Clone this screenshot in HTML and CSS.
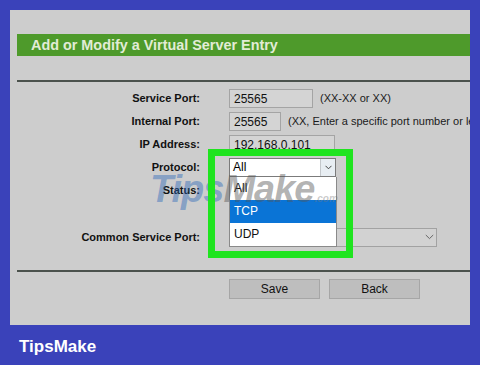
FILE: index.html
```html
<!DOCTYPE html>
<html lang="en">
<head>
    <meta charset="UTF-8">
    <meta name="viewport" content="width=device-width, initial-scale=1.0">
    <title>Add or Modify a Virtual Server Entry</title>
    <link rel="stylesheet" href="styles.css">
</head>
<body>
    <div class="panel">
        <h1 class="title-bar">Add or Modify a Virtual Server Entry</h1>
        <div class="rule"></div>

        <!-- Virtual server form -->
        <div class="form">
            <div class="row">
                <label>Service Port:</label>
                <div class="control">
                    <div class="text-box service">25565</div>
                    <span class="hint">(XX-XX or XX)</span>
                </div>
            </div>
            <div class="row">
                <label>Internal Port:</label>
                <div class="control">
                    <div class="text-box internal">25565</div>
                    <span class="hint">(XX, Enter a specific port number or leave it blank)</span>
                </div>
            </div>
            <div class="row">
                <label>IP Address:</label>
                <div class="control">
                    <div class="text-box address">192.168.0.101</div>
                </div>
            </div>
            <div class="row">
                <label>Protocol:</label>
                <div class="control">
                    <div class="select open">
                        <span class="value">All</span>
                        <span class="arrow">
                            <svg width="7" height="5" viewBox="0 0 7 5"><path d="M0.5 0.8 L3.5 3.8 L6.5 0.8" fill="none" stroke="#444" stroke-width="1"/></svg>
                        </span>
                    </div>
                </div>
            </div>
            <div class="row">
                <label>Status:</label>
                <div class="control">
                    <div class="select">
                        <span class="value">Enabled</span>
                    </div>
                </div>
            </div>
            <div class="row common">
                <label>Common Service Port:</label>
                <div class="control">
                    <div class="select wide">
                        <span class="value"></span>
                        <span class="arrow plain">
                            <svg width="9" height="6" viewBox="0 0 9 6"><path d="M0.8 1 L4.5 4.6 L8.2 1" fill="none" stroke="#666" stroke-width="1"/></svg>
                        </span>
                    </div>
                </div>
            </div>
        </div>

        <div class="rule bottom"></div>

        <div class="buttons">
            <button type="button">Save</button>
            <button type="button">Back</button>
        </div>

        <!-- open protocol list -->
        <ul class="dropdown">
            <li>All</li>
            <li class="selected">TCP</li>
            <li>UDP</li>
        </ul>

        <div class="watermark"><span class="tips">Tips</span><span class="make">Make</span><span class="com">.com</span></div>

        <!-- highlight around the protocol menu -->
        <div class="highlight"></div>
    </div>

    <div class="brand">TipsMake</div>
</body>
</html>
```

FILE: styles.css
```css
body {
    margin: 0;
    padding: 10px 0 0 0;
    height: 365px;
    box-sizing: border-box;
    background-color: #3a42ba;
    font-family: 'Liberation Sans', Arial, sans-serif;
    overflow: hidden;
}

.panel {
    position: relative;
    margin-left: 10px;
    width: 460px;
    height: 315px;
    padding: 24px 0 0 7px;
    box-sizing: border-box;
    background-color: #cdcdcd;
    overflow: hidden;
}

.title-bar {
    margin: 0;
    height: 22px;
    line-height: 22px;
    padding-left: 14px;
    background-color: #4e9a2b;
    color: #e2ecd6;
    font-size: 14.4px;
    font-weight: bold;
}

.rule {
    margin-top: 24px;
    height: 0;
    border-top: 2px solid #4b524d;
}

.form {
    margin-top: 6px;
}

.row {
    display: flex;
    align-items: center;
    gap: 29px;
    height: 20px;
    margin-bottom: 3px;
}

.row label {
    flex: none;
    width: 183px;
    text-align: right;
    font-size: 11px;
    font-weight: bold;
    color: #111;
}

.row.common {
    margin-top: 27px;
}

.control {
    flex: none;
    display: flex;
    align-items: center;
    gap: 7px;
    white-space: nowrap;
}

.text-box {
    flex: none;
    height: 19px;
    line-height: 19px;
    padding-left: 4px;
    box-sizing: border-box;
    background-color: #d4d4d4;
    border: 1px solid #a4a4a4;
    font-size: 12px;
    color: #111;
}

.text-box.service { width: 84px; }
.text-box.internal { width: 52px; }
.text-box.address { width: 106px; }

.hint {
    font-size: 11px;
    color: #1a1a1a;
}

.select {
    display: flex;
    width: 107px;
    height: 19px;
    box-sizing: border-box;
    background-color: #fff;
    border: 1px solid #7b7b7b;
    font-size: 12px;
    color: #000;
}

.select .value {
    flex: 1;
    line-height: 17px;
    padding-left: 3px;
}

.select .arrow {
    width: 14px;
    display: flex;
    align-items: center;
    justify-content: center;
    background-color: #e8eef3;
    border-left: 1px solid #c4c8cc;
}

.select.wide {
    width: 208px;
    background-color: #d2d2d2;
    border-color: #a2a2a2;
}

.select .arrow.plain {
    background: none;
    border: none;
}

.buttons {
    display: flex;
    gap: 9px;
    margin: 7px 0 0 212px;
}

.rule.bottom {
    margin-top: 23px;
}

button {
    width: 91px;
    height: 20px;
    padding: 0;
    background-color: #bebebe;
    border: 1px solid #a6a6a6;
    font-family: inherit;
    font-size: 12px;
    color: #111;
}

.dropdown {
    position: absolute;
    left: 219px;
    top: 167px;
    width: 106px;
    margin: 0;
    padding: 0;
    list-style: none;
    background-color: #fff;
    border: 1px solid #8a8a8a;
    border-top: none;
    font-size: 12px;
}

.dropdown li {
    height: 23px;
    line-height: 23px;
    padding-left: 4px;
    color: #111;
}

.dropdown li.selected {
    background-color: #0a74d6;
    color: #fff;
}

.watermark {
    position: absolute;
    left: 140px;
    top: 160px;
    font-size: 38px;
    font-weight: bold;
    font-style: italic;
    letter-spacing: -1px;
    line-height: 38px;
    white-space: nowrap;
}

.watermark .tips { color: rgba(45, 105, 185, 0.45); }
.watermark .make { color: rgba(85, 85, 85, 0.45); }
.watermark .com {
    font-size: 10px;
    letter-spacing: 0;
    color: rgba(120, 120, 120, 0.4);
}

.highlight {
    position: absolute;
    left: 198px;
    top: 139px;
    width: 145px;
    height: 109px;
    box-sizing: border-box;
    border: 7px solid #1fe41f;
}

.brand {
    margin-top: 12px;
    padding-left: 19px;
    font-size: 17px;
    font-weight: bold;
    color: #fff;
    line-height: 20px;
}
```
